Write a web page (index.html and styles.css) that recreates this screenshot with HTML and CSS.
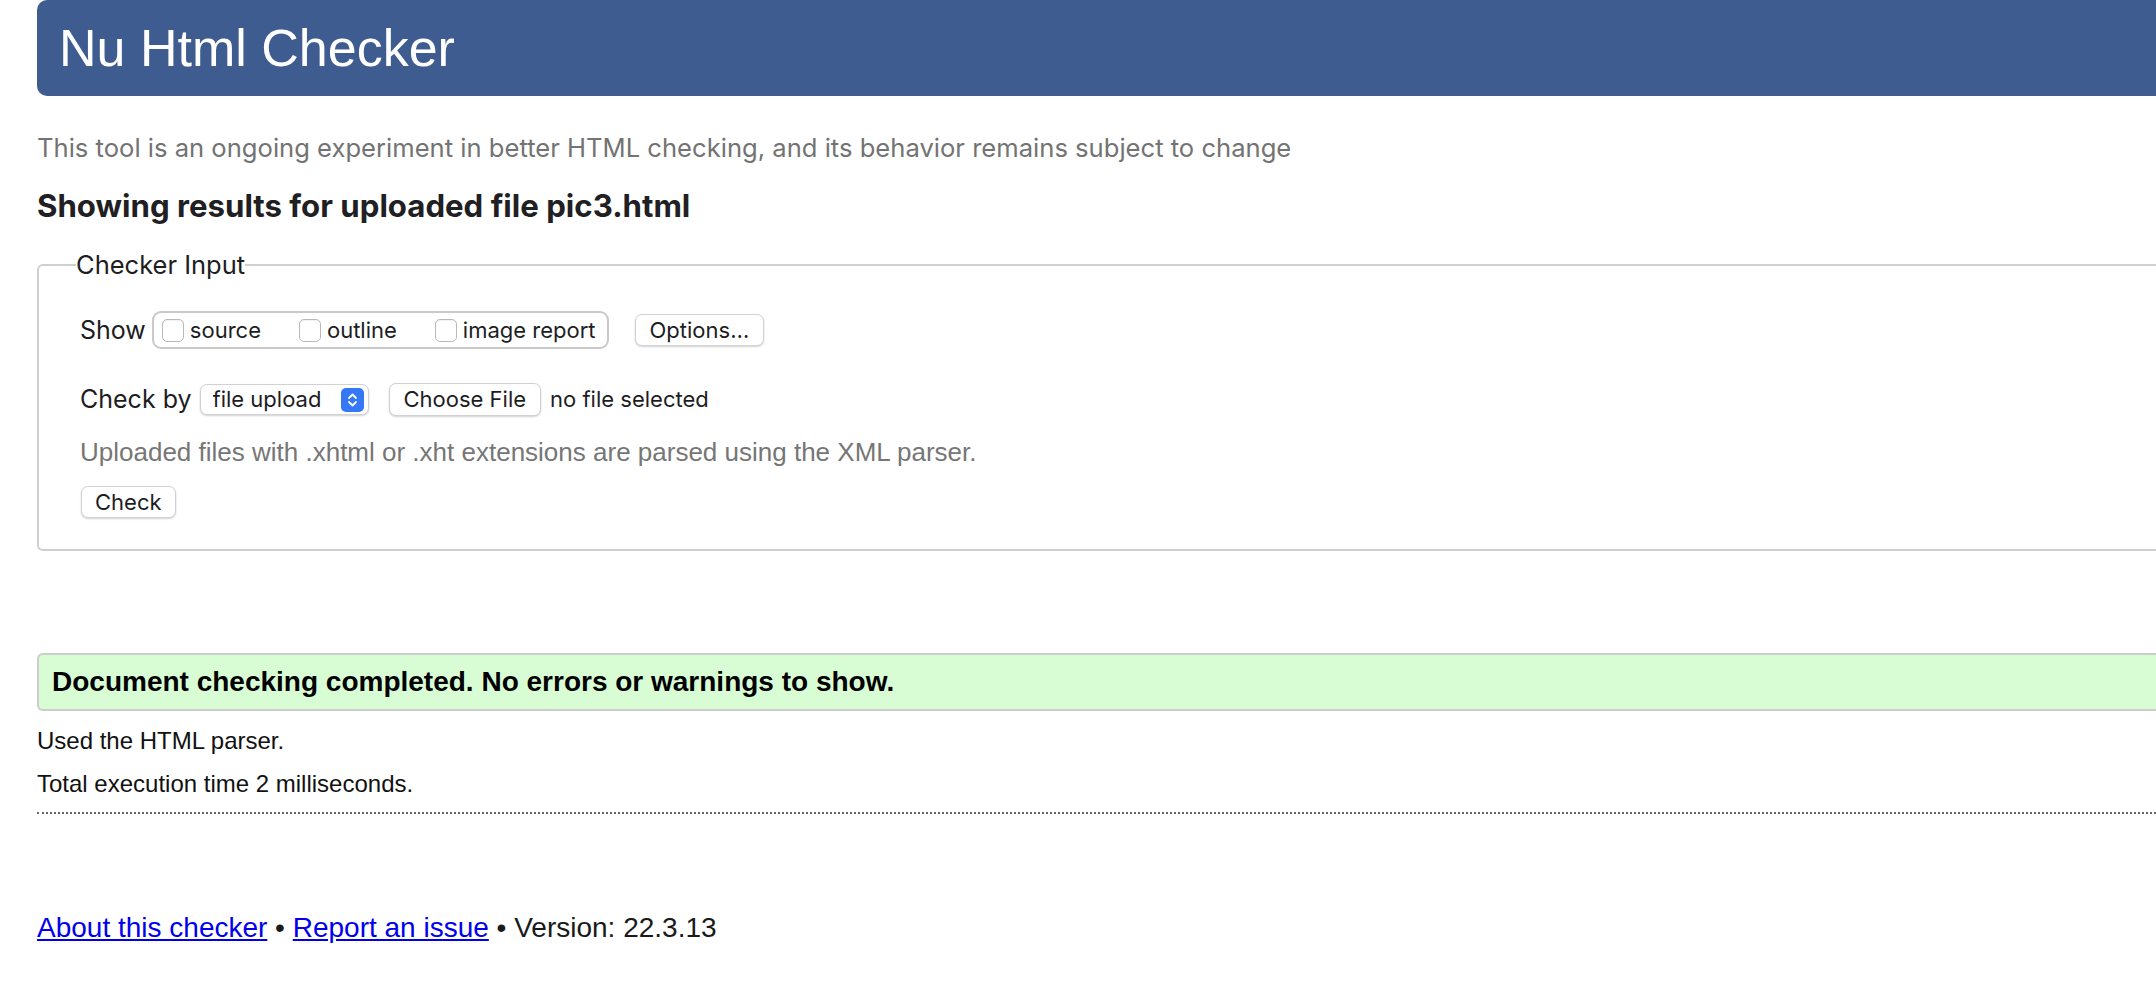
FILE: index.html
```html
<!DOCTYPE html>
<html lang="en">
<head>
<meta charset="utf-8">
<title>Showing results for uploaded file pic3.html - Nu Html Checker</title>
<link rel="stylesheet" href="styles.css">
</head>
<body>
<div class="page">
  <header class="masthead"><h1 class="title">Nu Html Checker</h1></header>
  <p class="intro">This tool is an ongoing experiment in better HTML checking, and its behavior remains subject to change</p>
  <h2 class="results-title">Showing results for uploaded file pic3.html</h2>

  <form class="checker-form">
    <fieldset class="checker-input">
      <legend class="legend">Checker Input</legend>
      <div class="row">
        <span class="row-label">Show</span>
        <div class="show-group">
          <label class="opt"><input type="checkbox" class="cb"><span>source</span></label>
          <label class="opt"><input type="checkbox" class="cb"><span>outline</span></label>
          <label class="opt"><input type="checkbox" class="cb"><span>image report</span></label>
        </div>
        <button type="button" class="btn btn-options">Options…</button>
      </div>
      <div class="row row-checkby">
        <span class="row-label">Check by</span>
        <span class="select-wrap">
          <select class="select"><option>file upload</option></select>
          <svg class="stepper" width="23" height="24" viewBox="0 0 23 24" aria-hidden="true">
            <rect x="0" y="0" width="23" height="24" rx="5" fill="#3478f6"/>
            <path d="M8 10 L11.5 6.5 L15 10" fill="none" stroke="#fff" stroke-width="1.8" stroke-linecap="round" stroke-linejoin="round"/>
            <path d="M8 14 L11.5 17.5 L15 14" fill="none" stroke="#fff" stroke-width="1.8" stroke-linecap="round" stroke-linejoin="round"/>
          </svg>
        </span>
        <button type="button" class="btn btn-file">Choose File</button>
        <span class="file-status">no file selected</span>
      </div>
      <p class="hint">Uploaded files with .xhtml or .xht extensions are parsed using the XML parser.</p>
      <button type="button" class="btn btn-check">Check</button>
    </fieldset>
  </form>

  <p class="success">Document checking completed. No errors or warnings to show.</p>
  <p class="details details-first">Used the HTML parser.</p>
  <p class="details">Total execution time 2 milliseconds.</p>
  <hr class="divider">
  <p class="footer"><a href="#">About this checker</a> • <a href="#">Report an issue</a> • Version: 22.3.13</p>
</div>
</body>
</html>
```
FILE: styles.css
```css
html { overflow: hidden; background: #fff; }
body {
  margin: 0;
  padding: 0 0 0 37px;
  font-family: "Liberation Sans", Arial, sans-serif;
  color: #111;
}
.page { margin-right: -24px; }

.masthead {
  height: 96px;
  background: #3e5c8f;
  border-radius: 10px 0 0 10px;
  display: flex;
  align-items: center;
  padding-left: 22px;
}
.title {
  margin: 0;
  font-family: "Liberation Sans", Arial, sans-serif;
  font-weight: 400;
  font-size: 52px;
  line-height: 60px;
  color: #fff;
}

.intro {
  margin: 37px 0 0;
  font-family: Inter, "Liberation Sans", sans-serif;
  font-size: 25.6px;
  line-height: 30px;
  color: #737373;
}
.results-title {
  margin: 25px 0 0;
  font-family: Inter, "Liberation Sans", sans-serif;
  font-weight: 700;
  font-size: 31.2px;
  line-height: 36px;
  color: #1f2023;
}

.checker-form { margin: 26px 0 0; }
.checker-input {
  margin: 0;
  border: 2px solid #cfcfcf;
  border-right: 0;
  border-radius: 6px 0 0 6px;
  padding: 31px 0 31px 41px;
  font-family: Inter, "Liberation Sans", sans-serif;
  color: #1d1d1f;
}
.legend {
  padding: 0;
  margin-left: -4px;
  font-size: 25.5px;
  line-height: 30px;
  color: #1d1d1f;
}

.row {
  display: flex;
  align-items: center;
  height: 38px;
}
.row-checkby { margin-top: 31px; }
.row-label {
  font-size: 25px;
  line-height: 30px;
  margin-right: 6px;
}
.row-checkby .row-label { margin-right: 8px; }

.show-group {
  display: flex;
  align-items: center;
  height: 38px;
  box-sizing: border-box;
  border: 2px solid #c9c9c9;
  border-radius: 9px;
  padding: 0 11px 0 8px;
}
.opt {
  display: flex;
  align-items: center;
  font-size: 22px;
  line-height: 28px;
}
.opt + .opt { margin-left: 38px; }
.cb {
  -webkit-appearance: none;
  appearance: none;
  width: 22px;
  height: 23px;
  margin: 0 6px 0 0;
  border: 1px solid #b9b9b9;
  border-radius: 5px;
  background: #fff;
  box-shadow: inset 0 1px 1px rgba(0,0,0,0.06);
}

.btn {
  font-family: Inter, "Liberation Sans", sans-serif;
  font-size: 22px;
  line-height: 28px;
  color: #1d1d1f;
  background: #fff;
  border: 1px solid #d2d2d2;
  border-radius: 7px;
  box-shadow: 0 1px 2px rgba(0,0,0,0.18);
  padding: 0 14px;
  height: 32px;
}
.btn-options { margin-left: 26px; padding: 0 14px; }
.btn-file { margin-left: 20px; height: 33px; padding: 0 14px; }
.btn-check { margin-top: 19px; height: 32px; padding: 0 13px; margin-left: 1px; display: block; }

.select-wrap {
  position: relative;
  display: inline-flex;
}
.select {
  -webkit-appearance: none;
  appearance: none;
  width: 169px;
  height: 31px;
  padding: 0 0 0 12px;
  font-family: Inter, "Liberation Sans", sans-serif;
  font-size: 22px;
  color: #1d1d1f;
  background: #fff;
  border: 1px solid #d2d2d2;
  border-radius: 7px;
  box-shadow: 0 1px 2px rgba(0,0,0,0.18);
}
.stepper {
  position: absolute;
  right: 5px;
  top: 4px;
}
.file-status {
  margin-left: 9px;
  font-size: 22px;
  line-height: 28px;
}

.hint {
  margin: 19px 0 0;
  font-family: "Liberation Sans", Arial, sans-serif;
  font-size: 26px;
  line-height: 30px;
  color: #767676;
}

.success {
  margin: 102px 0 0;
  background: #d8fdd4;
  border: 2px solid #cccccc;
  border-right: 0;
  border-radius: 6px 0 0 6px;
  padding: 0 0 0 13px;
  font-weight: 700;
  font-size: 28px;
  line-height: 54px;
  color: #000;
}
.details {
  margin: 13px 0 0;
  font-size: 24px;
  line-height: 30px;
  color: #111;
}
.details-first { margin-top: 15px; }
.divider {
  margin: 13px 0 0;
  border: 0;
  border-top: 2px dotted #666;
  height: 0;
}
.footer {
  margin: 97px 0 0;
  font-size: 28px;
  line-height: 34px;
  color: #1a1a1a;
}
.footer a { color: #0000ee; text-decoration: underline; }
```
